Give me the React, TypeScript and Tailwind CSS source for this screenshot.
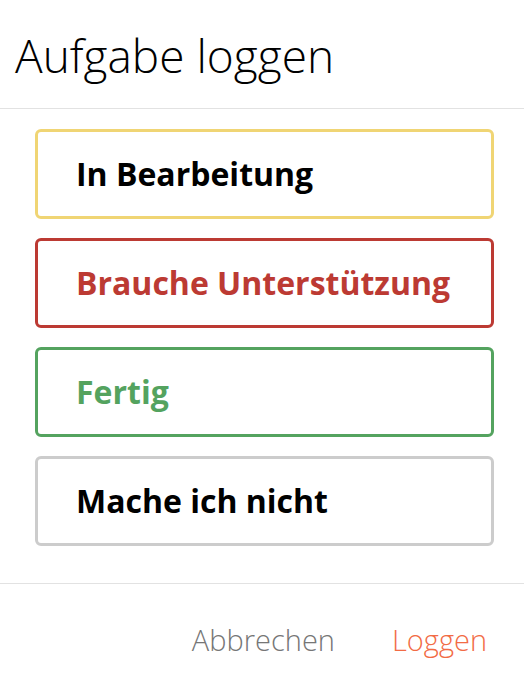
const options = [
  { label: "In Bearbeitung", border: "border-[#f0d574]", text: "text-black" },
  { label: "Brauche Unterstützung", border: "border-[#bc3a33]", text: "text-[#bc3a33]" },
  { label: "Fertig", border: "border-[#54a35f]", text: "text-[#54a35f]" },
  { label: "Mache ich nicht", border: "border-[#cccccc]", text: "text-black" },
];

export default function App() {
  return (
    <div
      className="w-[524px] h-[688px] bg-white flex flex-col"
      style={{ fontFamily: '"Open Sans", "Noto Sans", sans-serif' }}
    >
      {/* Header */}
      <div className="h-[109px] border-b border-[#e2e2e2] flex items-center px-[15px] pt-[2px]">
        <h1 className="text-[46px] font-light text-black leading-none">Aufgabe loggen</h1>
      </div>

      {/* Status options */}
      <div className="flex flex-col gap-[19px] pt-[20px] pl-[35px] pr-[30px] pb-[37px] border-b border-[#e2e2e2]">
        {options.map((o) => (
          <button
            key={o.label}
            className={`h-[90px] rounded-[6px] border-[3px] ${o.border} bg-white flex items-center pl-[38px] text-left`}
          >
            <span className={`text-[32px] font-bold ${o.text} leading-none`}>{o.label}</span>
          </button>
        ))}
      </div>

      {/* Footer */}
      <div className="flex justify-end items-center gap-[57px] pr-[37px] pt-[41px]">
        <button className="text-[29px] font-light text-[#767676] leading-none">Abbrechen</button>
        <button className="text-[29px] font-light text-[#f26b45] leading-none">Loggen</button>
      </div>
    </div>
  );
}
